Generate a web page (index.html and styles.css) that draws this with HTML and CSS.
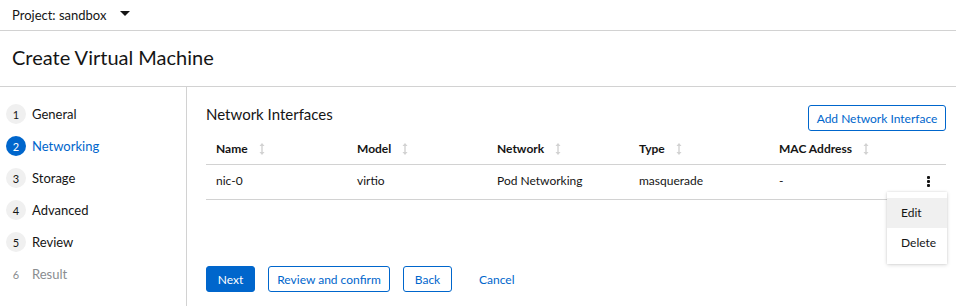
FILE: index.html
```html
<!DOCTYPE html>
<html lang="en">
<head>
  <meta charset="utf-8">
  <link rel="stylesheet" href="styles.css">
</head>
<body>
  <div class="project-bar">
    <span>Project: sandbox</span>
    <span class="caret"></span>
  </div>
  <h1 class="page-title">Create Virtual Machine</h1>

  <div class="wizard">
    <ul class="steps">
      <li class="step"><span class="num">1</span>General</li>
      <li class="step current"><span class="num">2</span>Networking</li>
      <li class="step"><span class="num">3</span>Storage</li>
      <li class="step"><span class="num">4</span>Advanced</li>
      <li class="step"><span class="num">5</span>Review</li>
      <li class="step disabled"><span class="num">6</span>Result</li>
    </ul>

    <div class="main">
      <div class="section-head">
        <h2>Network Interfaces</h2>
        <button class="btn secondary add">Add Network Interface</button>
      </div>

      <table class="nic-table">
        <thead>
          <tr>
            <th class="col-name">Name <svg class="sort" viewBox="0 0 6 12"><path d="M3 0 L0.5 3 H2.3 V9 H0.5 L3 12 L5.5 9 H3.7 V3 H5.5 Z"/></svg></th>
            <th class="col-model">Model <svg class="sort" viewBox="0 0 6 12"><path d="M3 0 L0.5 3 H2.3 V9 H0.5 L3 12 L5.5 9 H3.7 V3 H5.5 Z"/></svg></th>
            <th class="col-net">Network <svg class="sort" viewBox="0 0 6 12"><path d="M3 0 L0.5 3 H2.3 V9 H0.5 L3 12 L5.5 9 H3.7 V3 H5.5 Z"/></svg></th>
            <th class="col-type">Type <svg class="sort" viewBox="0 0 6 12"><path d="M3 0 L0.5 3 H2.3 V9 H0.5 L3 12 L5.5 9 H3.7 V3 H5.5 Z"/></svg></th>
            <th class="col-mac">MAC Address <svg class="sort" viewBox="0 0 6 12"><path d="M3 0 L0.5 3 H2.3 V9 H0.5 L3 12 L5.5 9 H3.7 V3 H5.5 Z"/></svg></th>
            <th class="col-act"></th>
          </tr>
        </thead>
        <tbody>
          <tr>
            <td>nic-0</td>
            <td>virtio</td>
            <td>Pod Networking</td>
            <td>masquerade</td>
            <td>-</td>
            <td class="col-act">
              <span class="kebab"><i></i><i></i><i></i></span>
              <ul class="menu">
                <li class="active">Edit</li>
                <li>Delete</li>
              </ul>
            </td>
          </tr>
        </tbody>
      </table>

      <div class="footer">
        <button class="btn primary small">Next</button>
        <button class="btn secondary wide">Review and confirm</button>
        <button class="btn secondary small">Back</button>
        <button class="btn link">Cancel</button>
      </div>
    </div>
  </div>
</body>
</html>
```

FILE: styles.css
```css
* {
  box-sizing: border-box;
}

body {
  margin: 0;
  font-family: Lato, "Noto Sans", sans-serif;
  color: #151515;
  background: #fff;
  width: 956px;
  height: 306px;
  overflow: hidden;
}

.project-bar {
  height: 31px;
  padding: 0 12px;
  display: flex;
  align-items: center;
  gap: 14px;
  font-size: 13px;
  border-bottom: 1px solid #d2d2d2;
}

.caret {
  width: 0;
  height: 0;
  border-left: 5px solid transparent;
  border-right: 5px solid transparent;
  border-top: 5px solid #151515;
  margin-top: -3px;
}

.page-title {
  margin: 0;
  height: 56px;
  padding: 0 12px 3px;
  display: flex;
  align-items: center;
  font-size: 20px;
  font-weight: 400;
  border-bottom: 1px solid #d2d2d2;
}

.wizard {
  display: flex;
  height: 219px;
}

.steps {
  list-style: none;
  margin: 0;
  padding: 11px 0 0 6px;
  width: 187px;
  border-right: 1px solid #d2d2d2;
}

.step {
  height: 32px;
  display: flex;
  align-items: center;
  gap: 6px;
  font-size: 13px;
}

.num {
  width: 20px;
  height: 20px;
  border-radius: 50%;
  background: #f0f0f0;
  display: flex;
  align-items: center;
  justify-content: center;
  font-size: 11px;
}

.step.current {
  color: #0066cc;
}

.step.current .num {
  background: #0066cc;
  color: #fff;
}

.step.disabled {
  color: #8a8d90;
}

.step.disabled .num {
  background: none;
}

.main {
  flex: 1;
  padding: 18px 10px 0 19px;
  display: flex;
  flex-direction: column;
}

.section-head {
  display: flex;
  justify-content: space-between;
  align-items: center;
}

.section-head h2 {
  margin: 0 0 4px;
  font-size: 15px;
  font-weight: 400;
  position: relative;
  top: -2px;
}

.btn {
  font-family: inherit;
  font-size: 12px;
  height: 26px;
  padding: 0 11px;
  border-radius: 3px;
  border: 1px solid #0066cc;
  background: #fff;
  color: #0066cc;
  cursor: pointer;
}

.btn.add {
  width: 138px;
  padding: 0;
}

.btn.small {
  width: 49px;
  padding: 0;
}

.btn.wide {
  width: 122px;
  padding: 0;
}

.btn.primary {
  background: #0066cc;
  color: #fff;
}

.btn.link {
  border-color: transparent;
  padding: 0 13px;
}

.nic-table {
  width: 100%;
  border-collapse: collapse;
  margin-top: 3px;
  font-size: 12px;
}

.nic-table th {
  text-align: left;
  font-weight: 700;
  height: 30px;
  padding: 0 10px;
  border-bottom: 1px solid #d2d2d2;
}

.nic-table td {
  height: 35px;
  padding: 0 10px 3px;
  border-bottom: 1px solid #d2d2d2;
}

.col-name { width: 141px; }
.col-model { width: 140px; }
.col-net { width: 142px; }
.col-type { width: 140px; }

.sort {
  width: 6px;
  height: 12px;
  margin-left: 8px;
  vertical-align: -2px;
  fill: #d2d2d2;
}

.col-act {
  position: relative;
  text-align: right;
}

.kebab {
  display: inline-flex;
  flex-direction: column;
  gap: 1px;
  margin-right: 6px;
  vertical-align: middle;
}

.kebab i {
  width: 3px;
  height: 3px;
  background: #151515;
  border-radius: 1px;
}

.menu {
  position: absolute;
  top: 27px;
  right: -1px;
  width: 60px;
  margin: 0;
  padding: 6px 0;
  list-style: none;
  background: #fff;
  text-align: left;
  box-shadow: 0 1px 4px rgba(3, 3, 3, 0.15), 0 0 2px rgba(3, 3, 3, 0.1);
  z-index: 2;
}

.menu li {
  height: 30px;
  line-height: 30px;
  padding-left: 14px;
  font-size: 12px;
}

.menu li.active {
  background: #f0f0f0;
}

.footer {
  margin-top: auto;
  margin-bottom: 14px;
  display: flex;
  gap: 13px;
}
```
